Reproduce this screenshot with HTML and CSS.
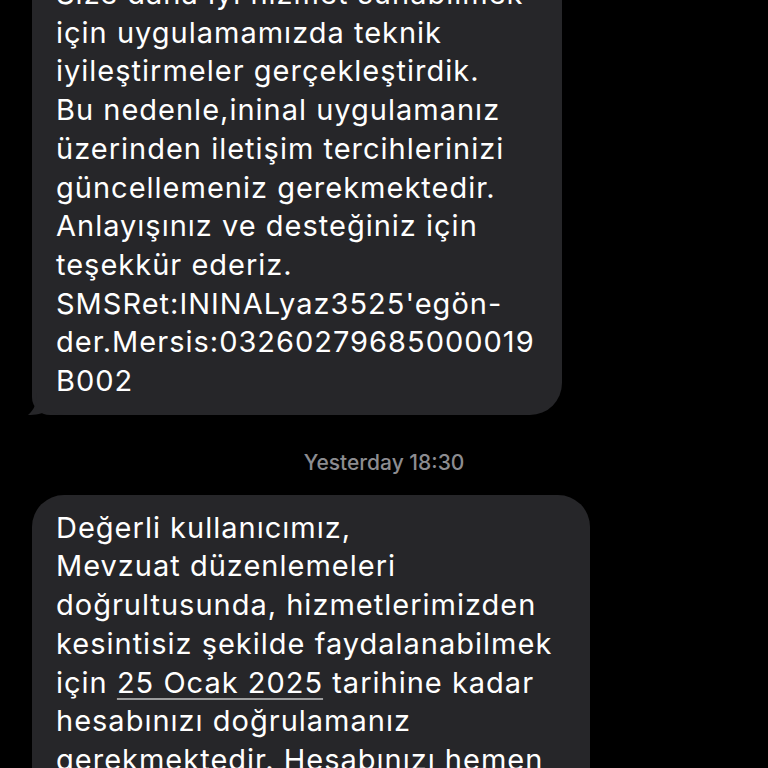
FILE: index.html
```html
<!DOCTYPE html>
<html lang="tr">
<head>
<meta charset="utf-8">
<title>Mesajlar</title>
<link rel="stylesheet" href="styles.css">
</head>
<body>
<div class="thread">
  <div class="bubble bubble-first">
    <p class="msg">Size daha iyi hizmet sunabilmek<br>için uygulamamızda teknik<br>iyileştirmeler gerçekleştirdik.<br>Bu nedenle,ininal uygulamanız<br>üzerinden iletişim tercihlerinizi<br>güncellemeniz gerekmektedir.<br>Anlayışınız ve desteğiniz için<br>teşekkür ederiz.<br>SMSRet:ININALyaz3525'egön-<br>der.Mersis:03260279685000019<br>B002</p>
    <svg class="tail" width="44" height="32" viewBox="0 0 44 32" aria-hidden="true">
      <path d="M14 0 L44 0 L44 32 C36 32 31 30 26 27 C20 31 12 32 5 32 C11 27 14 20 14 10 Z" fill="#262629"/>
    </svg>
  </div>
  <div class="stamp">Yesterday 18:30</div>
  <div class="bubble bubble-second">
    <p class="msg">Değerli kullanıcımız,<br>Mevzuat düzenlemeleri<br>doğrultusunda, hizmetlerimizden<br>kesintisiz şekilde faydalanabilmek<br>için <span class="link">25 Ocak 2025</span> tarihine kadar<br>hesabınızı doğrulamanız<br>gerekmektedir. Hesabınızı hemen<br>doğrulamak için ininal</p>
  </div>
</div>
</body>
</html>
```

FILE: styles.css
```css
html, body {
  margin: 0;
  padding: 0;
  background: #000;
  height: 768px;
  overflow: hidden;
}

.thread {
  display: flex;
  flex-direction: column;
  align-items: flex-start;
  margin-top: -39px;
  padding-left: 32px;
  font-family: Inter, "Noto Sans", sans-serif;
}

.bubble {
  position: relative;
  box-sizing: border-box;
  background: #262629;
  border-radius: 32px;
  padding: 14px 0 14px 24px;
}

.bubble-first {
  width: 530px;
  border-bottom-left-radius: 18px;
}

.bubble-second {
  width: 558px;
}

.msg {
  position: relative;
  z-index: 1;
  margin: 0;
  color: #fff;
  font-size: 29px;
  line-height: 38.7px;
  letter-spacing: 1px;
  white-space: nowrap;
}

.link {
  text-decoration: underline;
  text-decoration-color: rgba(255, 255, 255, 0.55);
  text-decoration-thickness: 1.5px;
  text-underline-offset: 5px;
}

.tail {
  position: absolute;
  left: -9px;
  bottom: 0;
}

.stamp {
  align-self: stretch;
  margin: 36px 0 21px -32px;
  text-align: center;
  color: #8c8c90;
  font-size: 21px;
  line-height: 23px;
  font-weight: 500;
}
```
